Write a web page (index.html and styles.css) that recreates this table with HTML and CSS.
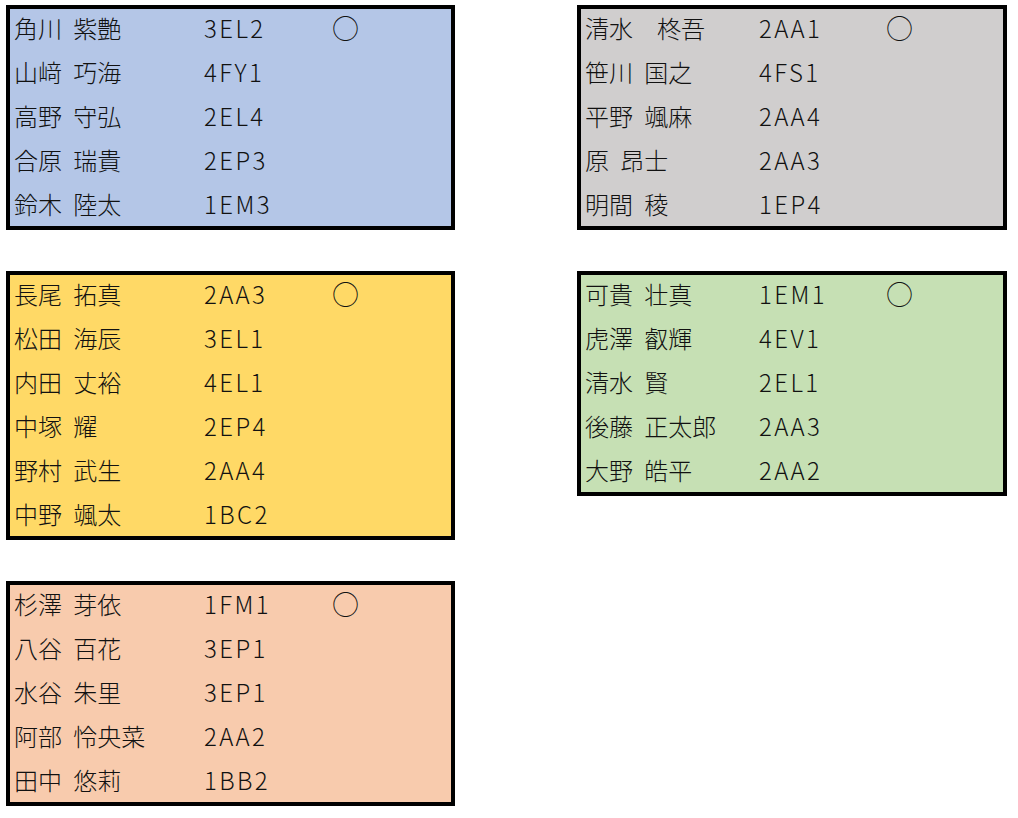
FILE: index.html
```html
<!DOCTYPE html>
<html lang="ja">
<head>
<meta charset="utf-8">
<title>班分け</title>
<link rel="stylesheet" href="styles.css">
</head>
<body>
<div class="sheet">
  <div class="col col-left">
    <div class="box blue">
      <div class="rows">
        <div class="row"><span class="name">角川 紫艶</span><span class="code">3EL2</span><span class="mark">○</span></div>
        <div class="row"><span class="name">山﨑 巧海</span><span class="code">4FY1</span><span class="mark"></span></div>
        <div class="row"><span class="name">高野 守弘</span><span class="code">2EL4</span><span class="mark"></span></div>
        <div class="row"><span class="name">合原 瑞貴</span><span class="code">2EP3</span><span class="mark"></span></div>
        <div class="row"><span class="name">鈴木 陸太</span><span class="code">1EM3</span><span class="mark"></span></div>
      </div>
    </div>
    <div class="box yellow">
      <div class="rows">
        <div class="row"><span class="name">長尾 拓真</span><span class="code">2AA3</span><span class="mark">○</span></div>
        <div class="row"><span class="name">松田 海辰</span><span class="code">3EL1</span><span class="mark"></span></div>
        <div class="row"><span class="name">内田 丈裕</span><span class="code">4EL1</span><span class="mark"></span></div>
        <div class="row"><span class="name">中塚 耀</span><span class="code">2EP4</span><span class="mark"></span></div>
        <div class="row"><span class="name">野村 武生</span><span class="code">2AA4</span><span class="mark"></span></div>
        <div class="row"><span class="name">中野 颯太</span><span class="code">1BC2</span><span class="mark"></span></div>
      </div>
    </div>
    <div class="box peach">
      <div class="rows">
        <div class="row"><span class="name">杉澤 芽依</span><span class="code">1FM1</span><span class="mark">○</span></div>
        <div class="row"><span class="name">八谷 百花</span><span class="code">3EP1</span><span class="mark"></span></div>
        <div class="row"><span class="name">水谷 朱里</span><span class="code">3EP1</span><span class="mark"></span></div>
        <div class="row"><span class="name">阿部 怜央菜</span><span class="code">2AA2</span><span class="mark"></span></div>
        <div class="row"><span class="name">田中 悠莉</span><span class="code">1BB2</span><span class="mark"></span></div>
      </div>
    </div>
  </div>
  <div class="col col-right">
    <div class="box gray">
      <div class="rows">
        <div class="row"><span class="name">清水　柊吾</span><span class="code">2AA1</span><span class="mark">○</span></div>
        <div class="row"><span class="name">笹川 国之</span><span class="code">4FS1</span><span class="mark"></span></div>
        <div class="row"><span class="name">平野 颯麻</span><span class="code">2AA4</span><span class="mark"></span></div>
        <div class="row"><span class="name">原 昂士</span><span class="code">2AA3</span><span class="mark"></span></div>
        <div class="row"><span class="name">明間 稜</span><span class="code">1EP4</span><span class="mark"></span></div>
      </div>
    </div>
    <div class="box green">
      <div class="rows">
        <div class="row"><span class="name">可貴 壮真</span><span class="code">1EM1</span><span class="mark">○</span></div>
        <div class="row"><span class="name">虎澤 叡輝</span><span class="code">4EV1</span><span class="mark"></span></div>
        <div class="row"><span class="name">清水 賢</span><span class="code">2EL1</span><span class="mark"></span></div>
        <div class="row"><span class="name">後藤 正太郎</span><span class="code">2AA3</span><span class="mark"></span></div>
        <div class="row"><span class="name">大野 皓平</span><span class="code">2AA2</span><span class="mark"></span></div>
      </div>
    </div>
  </div>
</div>
</body>
</html>
```

FILE: styles.css
```css
html, body {
  margin: 0;
  padding: 0;
  background: #ffffff;
}

body {
  font-family: "Noto Sans CJK JP", "Noto Sans", sans-serif;
  font-size: 24px;
  font-weight: 300;
  color: #111111;
}

.sheet {
  display: flex;
  align-items: flex-start;
  gap: 122px;
  padding: 5px 0 0 6px;
}

.col {
  display: flex;
  flex-direction: column;
  gap: 41px;
}

.col-left {
  width: 449px;
  --name-w: 190px;
  --code-w: 128px;
}

.col-right {
  width: 430px;
  --name-w: 174px;
  --code-w: 127px;
}

.box {
  border: 4px solid #000000;
  overflow: hidden;
}

.rows {
  margin: -3px 0 0 0;
}

.row {
  display: grid;
  grid-template-columns: var(--name-w) var(--code-w) 1fr;
  align-items: center;
  height: 44px;
  padding-left: 4px;
  line-height: 44px;
  white-space: nowrap;
}

.name {
  word-spacing: 6px;
}

.code {
  letter-spacing: 2.4px;
}

.mark {
  font-size: 27px;
  line-height: 44px;
}

.blue { background: #b4c6e7; }
.gray { background: #d0cece; }
.yellow { background: #ffd966; }
.green { background: #c6e0b4; }
.peach { background: #f8cbad; }
```
